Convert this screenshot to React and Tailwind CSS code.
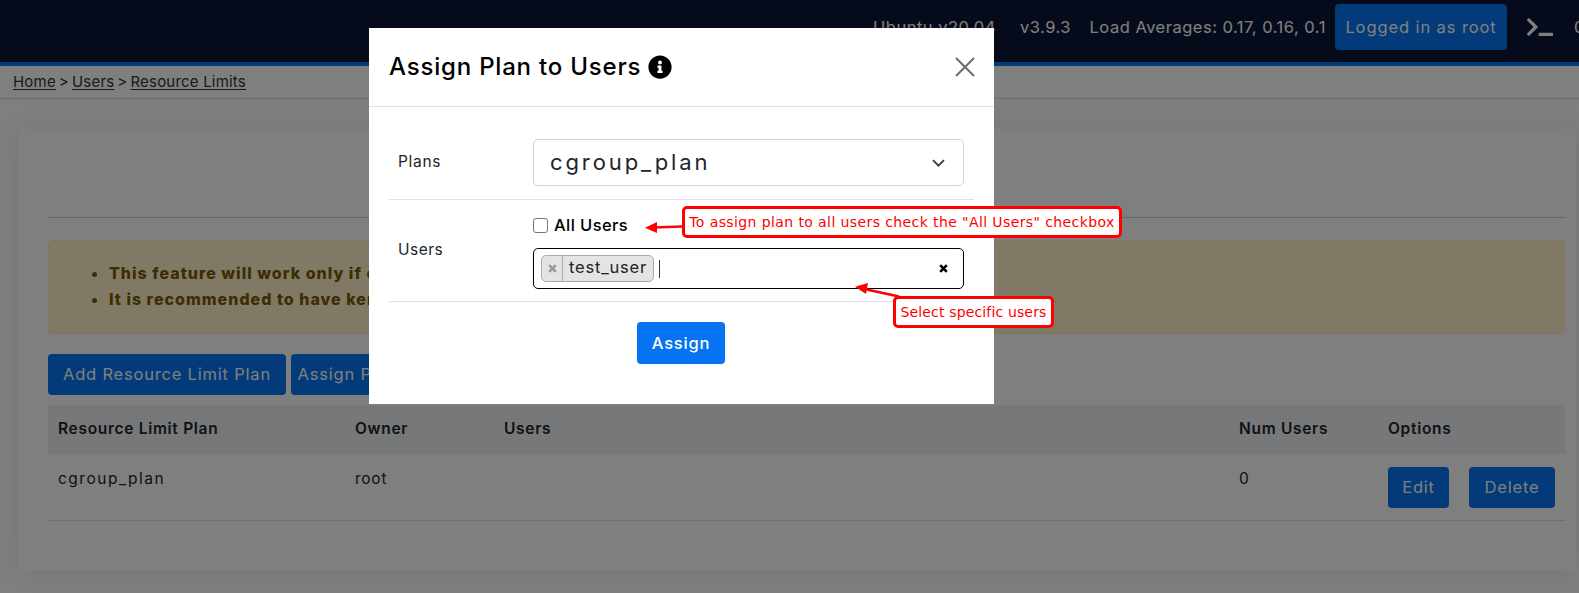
import React from 'react';
import { FaInfoCircle, FaTerminal } from 'react-icons/fa';

const font = { fontFamily: 'Inter, "Noto Sans", sans-serif' };

function XIcon({ className, color }) {
  return (
    <svg className={className} width="9" height="9" viewBox="0 0 9 9">
      <path d="M1.2 1.2L7.8 7.8M7.8 1.2L1.2 7.8" stroke={color} strokeWidth="2.6" fill="none" />
    </svg>
  );
}

function Header() {
  return (
    <div className="h-[66px] bg-[#0c1738] border-b-4 border-[#0674f2] overflow-hidden flex items-center pl-[873px] pb-[8px] text-white text-[16.5px] whitespace-nowrap">
      <span className="shrink-0 w-[147px] tracking-[0.5px]">Ubuntu v20.04</span>
      <span className="shrink-0 w-[69.5px] tracking-[0.5px]">v3.9.3</span>
      <span className="shrink-0 w-[245.5px] tracking-[0.5px]">Load Averages: 0.17, 0.16, 0.1</span>
      <span className="shrink-0 h-[46px] w-[172px] rounded-[4px] bg-[#0674f2] flex items-center justify-center tracking-[0.9px]">Logged in as root</span>
      <FaTerminal className="shrink-0 ml-[20px] text-[26px]" />
      <span className="shrink-0 ml-[21px]">09:41</span>
    </div>
  );
}

function Breadcrumb() {
  return (
    <div className="h-[33px] border-b border-[#d8d8d8] pl-[13px] flex items-center text-[15px] text-[#333] tracking-[0.2px]">
      <span className="underline underline-offset-2">Home</span>
      <span className="mx-[3px]">&gt;</span>
      <span className="underline underline-offset-2">Users</span>
      <span className="mx-[3px]">&gt;</span>
      <span className="underline underline-offset-2">Resource Limits</span>
    </div>
  );
}

function BlueButton({ className, children }) {
  return (
    <div className={'bg-[#0674f2] text-white rounded-[4px] flex items-center justify-center tracking-[0.8px] text-[16.5px] ' + className}>
      {children}
    </div>
  );
}

function Plans() {
  return (
    <div className="ml-[18px] mr-[3px] mt-[30px] h-[442px] bg-white shadow-[0_0_30px_rgba(0,0,0,0.1)] pl-[30px] pr-[11px]">
      <div className="h-[89px] border-b border-[#a9d0f5]" />
      <div className="mt-[22px] h-[94px] rounded-[4px] bg-[#fff3cd] border border-[#ffeeba] pl-[60px] pt-[19px] text-[#7a5c04] text-[16px] font-extrabold leading-[26px] tracking-[1px]">
        <ul className="list-disc">
          <li>This feature will work only if cgroups is enabled</li>
          <li>It is recommended to have kernel 4.5 or above</li>
        </ul>
      </div>
      <div className="mt-[20px] flex gap-[5px]">
        <BlueButton className="w-[238px] h-[41px]">Add Resource Limit Plan</BlueButton>
        <BlueButton className="w-[190px] h-[41px]">Assign Plan to Users</BlueButton>
      </div>
      <div className="mt-[10px] h-[49px] pb-[1px] bg-[#eef0f4] grid grid-cols-[297px_149px_735px_149px_1fr] items-center text-[15.5px] font-semibold text-[#212529] tracking-[0.7px]">
        <div className="pl-[10px]">Resource Limit Plan</div>
        <div className="pl-[10px]">Owner</div>
        <div className="pl-[10px]">Users</div>
        <div className="pl-[10px]">Num Users</div>
        <div className="pl-[10px]">Options</div>
      </div>
      <div className="h-[67px] border-b border-[#dcdcdc] grid grid-cols-[297px_149px_735px_149px_1fr] text-[15.5px] text-[#212529]">
        <div className="pl-[10px] pt-[13px] tracking-[1.5px]">cgroup_plan</div>
        <div className="pl-[10px] pt-[13px] tracking-[0.75px]">root</div>
        <div className="pl-[10px] pt-[13px]" />
        <div className="pl-[10px] pt-[13px]">0</div>
        <div className="pl-[10px] pt-[13px] flex gap-[20px]">
          <BlueButton className="w-[61px] h-[41px]">Edit</BlueButton>
          <BlueButton className="w-[86px] h-[41px]">Delete</BlueButton>
        </div>
      </div>
    </div>
  );
}

function Modal() {
  return (
    <div className="absolute left-[369px] top-[28px] w-[625px] bg-white text-[#212529]">
      <div className="h-[79px] border-b border-[#dee2e6] pl-[20px] pr-[19px] flex items-center">
        <span className="text-[24px] font-medium text-black tracking-[0.8px]">Assign Plan to Users</span>
        <FaInfoCircle className="ml-[7px] text-[24px] text-black" />
        <svg className="ml-auto" width="20" height="20" viewBox="0 0 20 20">
          <path d="M1 1L19 19M19 1L1 19" stroke="#6c6c6c" strokeWidth="2" fill="none" />
        </svg>
      </div>
      <div className="px-[20px] pt-[32px] pb-[40px]">
        <div className="flex items-center border-b border-[#dee2e6] pb-[13px]">
          <div className="w-[144px] pl-[9px] mb-[2px] text-[15.5px] tracking-[0.7px]">Plans</div>
          <div className="w-[431px] h-[47px] rounded-[5px] border border-[#ced4da] pl-[16px] pr-[18px] flex items-center justify-between text-[22px] text-[#212529]">
            <span className="tracking-[2.9px]">cgroup_plan</span>
            <svg width="13" height="8" viewBox="0 0 13 8">
              <path d="M1 1.2L6.5 6.7L12 1.2" stroke="#343a40" strokeWidth="1.8" fill="none" />
            </svg>
          </div>
        </div>
        <div className="flex items-center border-b border-[#dee2e6] pt-[16px] pb-[12px]">
          <div className="w-[144px] pl-[9px] mb-[6px] text-[15.5px] tracking-[0.5px]">Users</div>
          <div className="w-[431px]">
            <div className="h-[18px] flex items-center gap-[6px] mb-[14px] text-[16.5px] font-medium text-black tracking-[0.4px]">
              <input type="checkbox" readOnly className="appearance-none w-[15px] h-[15px] border border-[#767676] rounded-[3px] bg-white" />
              <span>All Users</span>
            </div>
            <div className="h-[41px] rounded-[5px] border border-black pl-[7px] pr-[15px] flex items-center">
              <div className="h-[27px] w-[113px] rounded-[5px] border border-[#aaa] bg-[#e4e4e4] flex items-stretch text-[16.5px]">
                <div className="w-[21px] border-r border-[#aaa] flex items-center justify-center">
                  <XIcon color="#999" />
                </div>
                <div className="pl-[6px] pb-[2px] flex items-center tracking-[0.8px]">test_user</div>
              </div>
              <div className="ml-[5px] w-px h-[18px] bg-[#333]" />
              <XIcon className="ml-auto" color="#000" />
            </div>
          </div>
        </div>
        <BlueButton className="mt-[20px] ml-[248px] w-[88px] h-[42px] font-medium">Assign</BlueButton>
      </div>
    </div>
  );
}

function Note({ className, children }) {
  return (
    <div
      className={'absolute h-[32px] border-[3px] border-[#ff0000] rounded-[5px] bg-white text-[#ff0000] text-[14px] flex items-center justify-center whitespace-nowrap ' + className}
      style={{ fontFamily: '"DejaVu Sans", sans-serif' }}
    >
      {children}
    </div>
  );
}

function Arrows() {
  return (
    <svg className="absolute left-0 top-0 pointer-events-none" width="1579" height="593" viewBox="0 0 1579 593">
      <path d="M683 226.5L652 227.5" stroke="#ff0000" strokeWidth="2.5" fill="none" />
      <path d="M645 227.7L657 222L657 233Z" fill="#ff0000" />
      <path d="M899 296.5L862 288.5" stroke="#ff0000" strokeWidth="2.5" fill="none" />
      <path d="M855 286.7L868 283L866 294Z" fill="#ff0000" />
    </svg>
  );
}

export default function App() {
  return (
    <div className="relative w-full h-screen overflow-hidden bg-white" style={font}>
      <Header />
      <Breadcrumb />
      <Plans />
      <div className="absolute inset-0 bg-black/50" />
      <Modal />
      <Arrows />
      <Note className="left-[682px] top-[206px] w-[440px] tracking-[0.4px]">To assign plan to all users check the "All Users" checkbox</Note>
      <Note className="left-[893px] top-[296px] w-[161px] tracking-[0.15px]">Select specific users</Note>
    </div>
  );
}
